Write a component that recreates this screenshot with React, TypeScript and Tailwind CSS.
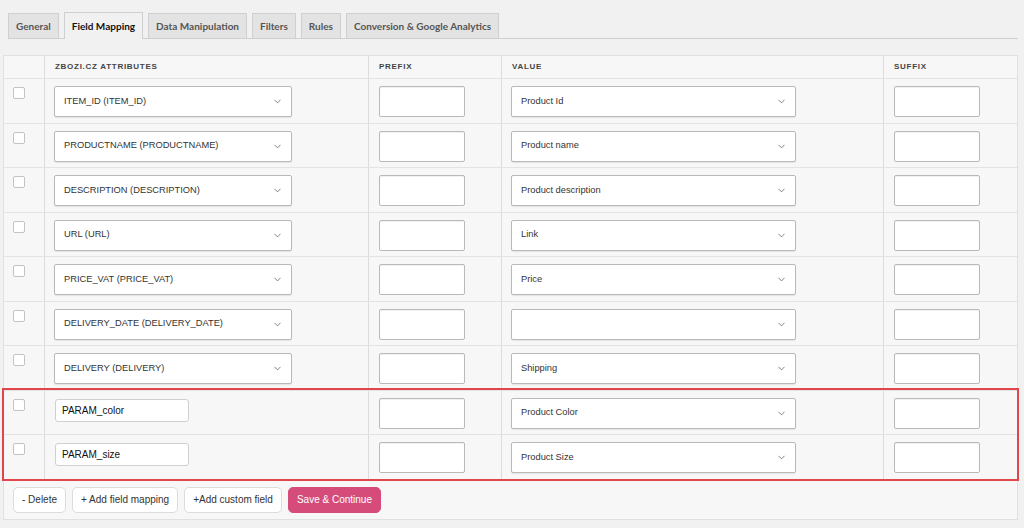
import { ChevronDown } from "lucide-react";

const tabs = ["General", "Field Mapping", "Data Manipulation", "Filters", "Rules", "Conversion & Google Analytics"];

type Row = { attr: string; value: string; custom?: boolean };

const rows: Row[] = [
  { attr: "ITEM_ID (ITEM_ID)", value: "Product Id" },
  { attr: "PRODUCTNAME (PRODUCTNAME)", value: "Product name" },
  { attr: "DESCRIPTION (DESCRIPTION)", value: "Product description" },
  { attr: "URL (URL)", value: "Link" },
  { attr: "PRICE_VAT (PRICE_VAT)", value: "Price" },
  { attr: "DELIVERY_DATE (DELIVERY_DATE)", value: "" },
  { attr: "DELIVERY (DELIVERY)", value: "Shipping" },
];

const custom: Row[] = [
  { attr: "PARAM_color", value: "Product Color", custom: true },
  { attr: "PARAM_size", value: "Product Size", custom: true },
];

function Select({ text, width }: { text: string; width: string }) {
  return (
    <div
      className={`${width} h-[31px] flex items-center justify-between bg-white border border-[#b9b9b9] rounded-[2px] shadow-[0_1px_1px_rgba(0,0,0,0.08)] pl-[9px] pr-[8px] text-[9.3px] text-[#333]`}
    >
      <span>{text}</span>
      <ChevronDown size={11} strokeWidth={1.6} className="text-[#555]" />
    </div>
  );
}

function TextBox() {
  return <div className="w-[86px] h-[31px] bg-white border border-[#b9b9b9] rounded-[2px] shadow-[inset_0_1px_1px_rgba(0,0,0,0.06)]" />;
}

function MappingRow({ row }: { row: Row }) {
  return (
    <div className="flex h-[44.5px] border-t border-[#e3e3e3]">
      <div className="w-[41px] border-r border-[#dcdcdc] pl-[9px] pt-[8px]">
        <div className="w-[12px] h-[12px] bg-white border border-[#c3c3c3] rounded-[2px]" />
      </div>
      <div className="w-[324px] border-r border-[#dcdcdc] pl-[9px] pt-[7px]">
        {row.custom ? (
          <div className="ml-[1px] mt-[1px] w-[134px] h-[23px] bg-white border border-[#d0d0d0] rounded-[3px] flex items-center pl-[6px] text-[10px] text-[#111]">
            {row.attr}
          </div>
        ) : (
          <Select text={row.attr} width="w-[238px]" />
        )}
      </div>
      <div className="w-[133px] border-r border-[#dcdcdc] pl-[10px] pt-[7px]">
        <TextBox />
      </div>
      <div className="w-[382px] border-r border-[#dcdcdc] pl-[9px] pt-[7px]">
        <Select text={row.value} width="w-[285px]" />
      </div>
      <div className="flex-1 pl-[10px] pt-[7px]">
        <TextBox />
      </div>
    </div>
  );
}

export default function App() {
  return (
    <div className="w-[1024px] h-[528px] bg-[#f1f1f1] overflow-hidden" style={{ fontFamily: '"Liberation Sans", Arial, sans-serif' }}>
      <div className="ml-[8px] mr-[6px] pt-[12px] flex items-end gap-[5px] border-b border-[#cfcfcf]" style={{ fontFamily: "Lato, sans-serif" }}>
        {tabs.map((t) =>
          t === "Field Mapping" ? (
            <div key={t} className="h-[27px] -mb-px px-[7px] flex items-center bg-[#f1f1f1] border border-b-0 border-[#cfcfcf] text-[10px] font-bold text-[#111]">
              {t}
            </div>
          ) : (
            <div key={t} className="h-[25px] px-[7px] flex items-center bg-[#e3e3e3] border border-b-0 border-[#cfcfcf] text-[10px] font-bold text-[#555]">
              {t}
            </div>
          )
        )}
      </div>

      <div className="ml-[3px] mt-[16px] w-[1015px] bg-[#f7f7f7] border border-[#e0e0e0]">
        <div className="flex h-[22px] text-[8px] font-bold tracking-[0.09em] text-[#444] uppercase">
          <div className="w-[41px] border-r border-[#dcdcdc]" />
          <div className="w-[324px] border-r border-[#dcdcdc] pl-[10px] flex items-center">Zbozi.cz Attributes</div>
          <div className="w-[133px] border-r border-[#dcdcdc] pl-[10px] flex items-center">Prefix</div>
          <div className="w-[382px] border-r border-[#dcdcdc] pl-[10px] flex items-center">Value</div>
          <div className="flex-1 pl-[10px] flex items-center">Suffix</div>
        </div>
        {rows.map((r) => (
          <MappingRow key={r.attr} row={r} />
        ))}
        <div className="outline-2 outline-[#e0474c]">
          {custom.map((r) => (
            <MappingRow key={r.attr} row={r} />
          ))}
        </div>
        <div className="flex gap-[6px] pl-[9px] pt-[8px] pb-[6px] text-[10px]">
          <button className="h-[26px] px-[8px] bg-white border border-[#dcdcdc] rounded-[5px] text-[#333]">- Delete</button>
          <button className="h-[26px] px-[8px] bg-white border border-[#dcdcdc] rounded-[5px] text-[#333]">+ Add field mapping</button>
          <button className="h-[26px] px-[8px] bg-white border border-[#dcdcdc] rounded-[5px] text-[#333]">+Add custom field</button>
          <button className="h-[26px] px-[8px] bg-[#d54c7b] border border-[#d54c7b] rounded-[5px] text-white">Save &amp; Continue</button>
        </div>
      </div>
    </div>
  );
}
